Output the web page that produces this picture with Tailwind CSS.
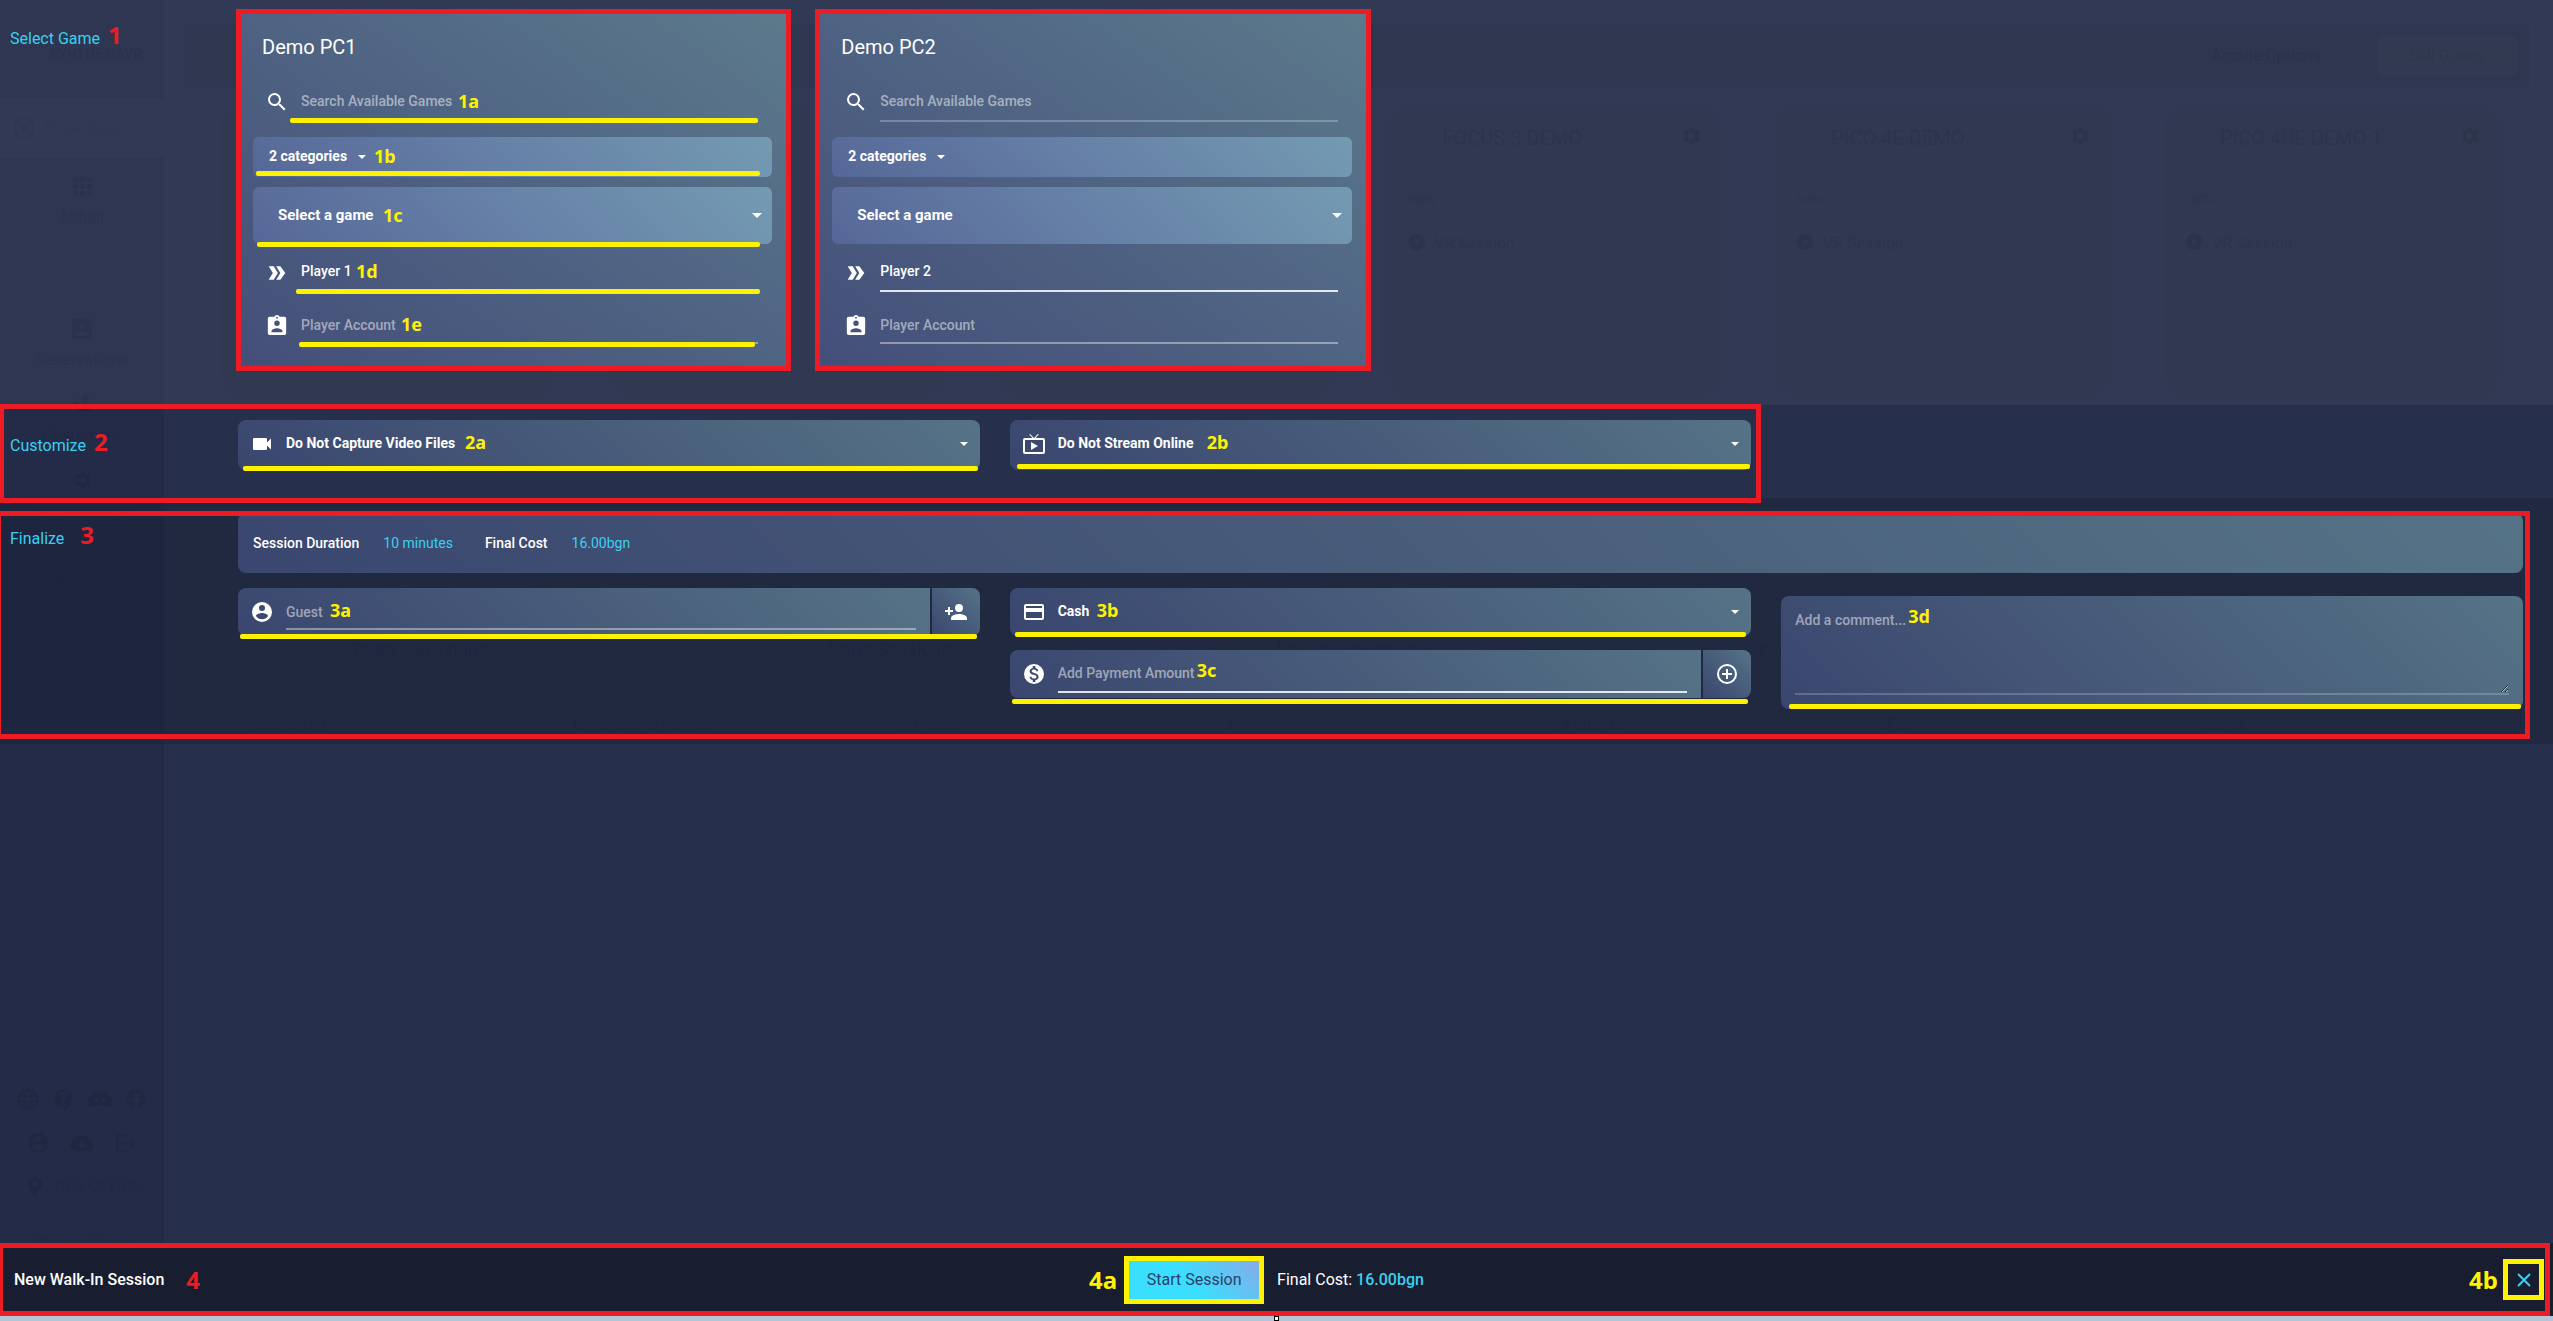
<!DOCTYPE html>
<html lang="en">
  <head>
    <meta charset="utf-8" />
    <title>New Walk-In Session</title>
    <script src="https://cdn.jsdelivr.net/npm/@tailwindcss/browser@4"></script>
  </head>
  <body
    class="relative flex min-h-screen flex-col overflow-x-hidden bg-[#262f4b] font-['Roboto',sans-serif] text-sm text-white"
  >
    <!-- icons -->
    <svg class="hidden">
      <symbol id="i-search" viewBox="0 0 24 24"><path d="M15.5 14h-.79l-.28-.27A6.47 6.47 0 0 0 16 9.5 6.5 6.5 0 1 0 9.5 16c1.61 0 3.09-.59 4.23-1.57l.27.28v.79l5 4.99L20.49 19l-4.99-5zm-6 0C7.01 14 5 11.99 5 9.5S7.01 5 9.5 5 14 7.01 14 9.5 11.99 14 9.5 14z" /></symbol>
      <symbol id="i-chevrons" viewBox="0 0 24 24"><path d="M2 4h6l5 8-5 8H2l5-8zM11 4h5l6 8-6 8h-5l5-8z" /></symbol>
      <symbol id="i-badge" viewBox="0 0 24 24"><path d="M20 3h-5.180C14.4 1.84 13.3 1 12 1s-2.4.84-2.82 2H4a2 2 0 0 0-2 2v16a2 2 0 0 0 2 2h16a2 2 0 0 0 2-2V5a2 2 0 0 0-2-2zm-8 0a1 1 0 1 1 0 2 1 1 0 0 1 0-2zm0 4a3 3 0 1 1 0 6 3 3 0 0 1 0-6zm6 13H6v-1.4c0-2 4-3.1 6-3.1s6 1.1 6 3.1V20z" /></symbol>
      <symbol id="i-video" viewBox="0 0 24 24"><path d="M17 10.5V7a1 1 0 0 0-1-1H4a1 1 0 0 0-1 1v10a1 1 0 0 0 1 1h12a1 1 0 0 0 1-1v-3.500l4 4v-11l-4 4z" /></symbol>
      <symbol id="i-live" viewBox="0 0 24 24"><path d="M21 6h-7.590l3.290-3.290L16 2l-4 4-4-4-.71.710L10.590 6H3a2 2 0 0 0-2 2v12a2 2 0 0 0 2 2h18a2 2 0 0 0 2-2V8a2 2 0 0 0-2-2zm0 14H3V8h18v12zM9 10v8l7-4z" /></symbol>
      <symbol id="i-account" viewBox="0 0 24 24"><path d="M12 2a10 10 0 1 0 0 20 10 10 0 0 0 0-20zm0 3a3 3 0 1 1 0 6 3 3 0 0 1 0-6zm0 14.200a7.200 7.200 0 0 1-6-3.220c.03-1.990 4-3.080 6-3.080s5.970 1.090 6 3.080a7.200 7.200 0 0 1-6 3.220z" /></symbol>
      <symbol id="i-adduser" viewBox="0 0 24 24"><path d="M15 12a4 4 0 1 0 0-8 4 4 0 0 0 0 8zm-9-2V7H4v3H1v2h3v3h2v-3h3v-2H6zm9 4c-2.670 0-8 1.340-8 4v2h16v-2c0-2.660-5.330-4-8-4z" /></symbol>
      <symbol id="i-card" viewBox="0 0 24 24"><path d="M20 4H4a2 2 0 0 0-2 2v12a2 2 0 0 0 2 2h16a2 2 0 0 0 2-2V6a2 2 0 0 0-2-2zm0 14H4v-6h16v6zm0-10H4V6h16v2z" /></symbol>
      <symbol id="i-dollar" viewBox="0 0 24 24"><path d="M12 2a10 10 0 1 0 0 20 10 10 0 0 0 0-20zm1.410 16.090V20h-2.670v-1.930c-1.710-.360-3.160-1.460-3.270-3.400h1.960c.1 1.050.82 1.870 2.650 1.870 1.960 0 2.400-.98 2.400-1.590 0-.830-.44-1.610-2.670-2.140-2.480-.6-4.180-1.620-4.180-3.670 0-1.720 1.390-2.840 3.110-3.210V4h2.670v1.950c1.860.450 2.790 1.860 2.850 3.390H14.300c-.05-1.110-.64-1.870-2.220-1.870-1.500 0-2.400.68-2.400 1.640 0 .840.65 1.390 2.670 1.910s4.180 1.390 4.180 3.910c-.01 1.830-1.380 2.830-3.120 3.160z" /></symbol>
      <symbol id="i-add" viewBox="0 0 24 24"><path d="M13 7h-2v4H7v2h4v4h2v-4h4v-2h-4V7zm-1-5a10 10 0 1 0 0 20 10 10 0 0 0 0-20zm0 18a8 8 0 1 1 0-16 8 8 0 0 1 0 16z" /></symbol>
      <symbol id="i-arrow" viewBox="0 0 10 5"><path d="M0 0h10L5 5z" /></symbol>
      <symbol id="i-gear" viewBox="0 0 24 24"><path fill-rule="evenodd" d="M19.140 12.940a7 7 0 0 0 0-1.880l2.030-1.580-1.920-3.320-2.390.960a7 7 0 0 0-1.620-.94L14.880 3.600h-3.840l-.36 2.580a7 7 0 0 0-1.620.94l-2.390-.96-1.920 3.320 2.030 1.580a7 7 0 0 0 0 1.880l-2.030 1.580 1.920 3.320 2.390-.96c.5.380 1.030.700 1.620.94l.36 2.580h3.840l.36-2.580c.59-.24 1.130-.560 1.620-.94l2.390.96 1.920-3.320zM12 15.600a3.600 3.600 0 1 1 0-7.200 3.600 3.600 0 0 1 0 7.200z" /></symbol>
      <symbol id="i-play" viewBox="0 0 24 24"><path fill-rule="evenodd" d="M12 2a10 10 0 1 0 0 20 10 10 0 0 0 0-20zM10 7.500v9l6-4.500z" /></symbol>
      <symbol id="i-pin" viewBox="0 0 24 24"><path fill-rule="evenodd" d="M12 2a7 7 0 0 0-7 7c0 5.250 7 13 7 13s7-7.750 7-13a7 7 0 0 0-7-7zm0 9.500a2.500 2.500 0 1 1 0-5 2.500 2.500 0 0 1 0 5z" /></symbol>
      <symbol id="i-logout" viewBox="0 0 24 24"><path d="M17 7l-1.400 1.400L18.200 11H8v2h10.200l-2.600 2.600L17 17l5-5zM4 5h8V3H4a2 2 0 0 0-2 2v14a2 2 0 0 0 2 2h8v-2H4z" /></symbol>
      <symbol id="i-cloud" viewBox="0 0 24 24"><path d="M19.350 10.040A7.490 7.490 0 0 0 5.350 8.040 6 6 0 0 0 6 20h13a5 5 0 0 0 .35-9.960zM17 13l-5 5-5-5h3V9h4v4z" /></symbol>
      <symbol id="i-globe" viewBox="0 0 24 24"><path d="M12 2.500a9.500 9.500 0 1 0 0 19 9.500 9.500 0 0 0 0-19zM3 9h18M3 15h18M12 3c-5 5-5 13 0 18M12 3c5 5 5 13 0 18" fill="none" stroke="currentColor" stroke-width="2" /></symbol>
      <symbol id="i-apps" viewBox="0 0 24 24"><path d="M3 3h5v5H3zM10 3h5v5h-5zM17 3h5v5h-5zM3 10h5v5H3zM10 10h5v5h-5zM17 10h5v5h-5zM3 17h5v5H3zM10 17h5v5h-5zM17 17h5v5h-5z" /></symbol>
      <symbol id="i-help" viewBox="0 0 24 24"><path fill-rule="evenodd" d="M11.500 2a9.500 9.500 0 0 0 0 19h.5v3c4.860-2.340 8-7 8-11.500A9.500 9.500 0 0 0 11.500 2zm1 15.500h-2v-2h2zm0-3.500h-2c0-3.250 3-3 3-5a2 2 0 0 0-4 0h-2a4 4 0 0 1 8 0c0 2.500-3 2.750-3 5z" /></symbol>
      <symbol id="i-discord" viewBox="0 0 24 24"><path fill-rule="evenodd" d="M8 4C6 4.300 4.500 5 3.500 5.500 1 9.500 0 13.500.5 18c2 1.500 4 2.300 6 2.700l1.200-2.200h8.600l1.200 2.200c2-.4 4-1.200 6-2.700.5-4.500-.5-8.500-3-12.500C19.500 5 18 4.300 16 4l-.8 1.500H8.800zM8 10a2 2 0 1 1 0 4.500A2 2 0 0 1 8 10zm8 0a2 2 0 1 1 0 4.500 2 2 0 0 1 0-4.500z" /></symbol>
      <symbol id="i-facebook" viewBox="0 0 24 24"><path d="M22 12a10 10 0 1 0-11.500 9.900v-7H8V12h2.500V9.800c0-2.500 1.500-3.900 3.800-3.900 1.100 0 2.200.2 2.200.2v2.500h-1.300c-1.200 0-1.600.8-1.600 1.500V12h2.800l-.4 2.900h-2.400v7A10 10 0 0 0 22 12z" /></symbol>
    </svg>

    <!-- dimmed dashboard behind the dialog -->
    <div class="absolute inset-0 flex overflow-hidden text-base text-black/10" aria-hidden="true">
      <div class="flex w-[164px] shrink-0 flex-col items-center bg-[#232b48] text-black/7">
        <p class="mt-[46px] pl-7 text-sm leading-4 font-bold">SYNTHESISVR</p>
        <div class="mt-9 flex h-[60px] w-full items-center gap-2 rounded-r bg-white/2 pl-3">
          <svg class="size-6 fill-current"><use href="#i-add" /></svg>Book Session
        </div>
        <svg class="mt-4 size-6 fill-current"><use href="#i-apps" /></svg>
        <p class="mt-2">Mihail</p>
        <svg class="mt-[86px] size-6 fill-current"><use href="#i-badge" /></svg>
        <p class="mt-2">Reservations</p>
        <svg class="mt-5 size-6 fill-current"><use href="#i-adduser" /></svg>
        <p class="mt-2">Customers</p>
        <svg class="mt-5 size-6 fill-current"><use href="#i-gear" /></svg>
        <p class="mt-2">Administration</p>
        <p class="mt-12">Reports</p>
        <div class="mt-auto mb-5 flex items-center gap-3">
          <svg class="size-6 fill-current"><use href="#i-globe" /></svg>
          <svg class="size-6 fill-current"><use href="#i-help" /></svg>
          <svg class="size-6 fill-current"><use href="#i-discord" /></svg>
          <svg class="size-6 fill-current"><use href="#i-facebook" /></svg>
        </div>
        <div class="mb-5 flex gap-5">
          <svg class="size-6 fill-current"><use href="#i-account" /></svg>
          <svg class="size-6 fill-current"><use href="#i-cloud" /></svg>
          <svg class="size-6 fill-current"><use href="#i-logout" /></svg>
        </div>
        <p class="mb-8 flex items-center gap-2">
          <svg class="size-6 fill-current"><use href="#i-pin" /></svg>DEV OFFICE
        </p>
        <p class="mb-[66px]">Privacy Policy</p>
      </div>
      <div class="min-w-0 flex-1 pt-6 pr-6 pl-5">
        <div class="flex h-16 items-center justify-end gap-14 rounded bg-black/6 pr-3">
          <p>Arcade Options</p>
          <p class="flex h-10 items-center rounded bg-white/2 px-8">Sell Goods</p>
        </div>
        <div class="mt-4 mr-7 ml-9 grid h-[294px] grid-cols-6 gap-[52px]">
          <div class="rounded-3xl bg-black/2"></div>
          <div class="rounded-3xl bg-black/2"></div>
          <div class="rounded-3xl bg-black/2"></div>
          <div class="rounded-3xl bg-black/2 px-5 pt-5">
            <p class="flex justify-between pl-9 text-xl">FOCUS 3 DEMO <svg class="size-6 fill-current"><use href="#i-gear" /></svg></p>
            <p class="mt-10 text-xs">100%</p>
            <p class="mt-6 flex gap-2"><svg class="size-5 fill-current"><use href="#i-play" /></svg>VR Session</p>
          </div>
          <div class="rounded-3xl bg-black/2 px-5 pt-5">
            <p class="flex justify-between pl-9 text-xl">PICO 4E DEMO <svg class="size-6 fill-current"><use href="#i-gear" /></svg></p>
            <p class="mt-10 text-xs">100%</p>
            <p class="mt-6 flex gap-2"><svg class="size-5 fill-current"><use href="#i-play" /></svg>VR Session</p>
          </div>
          <div class="rounded-3xl bg-black/2 px-5 pt-5">
            <p class="flex justify-between pl-9 text-xl">PICO 4UE DEMO 1 <svg class="size-6 fill-current"><use href="#i-gear" /></svg></p>
            <p class="mt-10 text-xs">100%</p>
            <p class="mt-6 flex gap-2"><svg class="size-5 fill-current"><use href="#i-play" /></svg>VR Session</p>
          </div>
        </div>
        <div class="mt-[238px] grid grid-cols-5 text-center text-lg text-black/7">
          <p>Today's Sessions</p>
          <p>Active Sessions</p>
          <p>Upcoming Sessions</p>
          <p>Walk-in Sessions</p>
          <p>Completed Sessions</p>
        </div>
        <div class="mt-[50px] grid grid-cols-7 pl-16 text-black/7">
          <p>Completed</p>
          <p>02:32pm - 02:32pm</p>
          <p>20 mins</p>
          <p>1</p>
          <p>24.00bgn</p>
          <p>TEST</p>
          <p>Guest</p>
        </div>
      </div>
    </div>

    <!-- 1: select game -->
    <section class="relative flex min-h-[405px] bg-white/5 pt-[9px]">
      <h2 class="w-[236px] shrink-0 pt-3 pl-[10px] text-base leading-7 text-[#3bd0ef]">
        Select Game
        <b class="ml-1 font-['Noto_Sans',sans-serif] text-2xl leading-7 text-[#ed1c24]">1</b>
      </h2>
      <div class="grid flex-1 grid-cols-4 items-start gap-6 pr-6">
        <div class="border-5 border-[#ed1c24] bg-[linear-gradient(35deg,#444f79,#4f6383_50%,#5c7a8c)] pt-[19px] pb-[22px]">
          <h3 class="pl-[21px] text-xl leading-7">Demo PC1</h3>
          <div class="relative mt-[21px] flex h-10 pr-7 pl-[60px]">
            <svg class="absolute top-2 left-6 size-6 fill-white"><use href="#i-search" /></svg>
            <input type="text" aria-label="Search available games" placeholder="Search Available Games" class="w-full border-b-2 border-white/25 text-sm font-medium outline-none placeholder:text-white/50" />
            <b class="absolute top-[7px] left-[217px] font-['Noto_Sans',sans-serif] text-lg leading-6 text-[#fff200]">1a</b>
            <span class="absolute right-7 -bottom-px left-[49px] h-[5px] rounded-xs bg-[#fff200]"></span>
          </div>
          <div class="relative mt-[15px] mr-[14px] ml-3 h-10 rounded-md bg-[linear-gradient(45deg,#566797,#657fa6_45%,#749bb2)]">
            <select aria-label="Categories" class="h-[38px] w-full appearance-none px-4 font-bold outline-none"><option>2 categories</option></select>
            <svg class="absolute top-[18px] left-[105px] h-1 w-2 fill-white"><use href="#i-arrow" /></svg>
            <b class="absolute top-[7px] left-[121px] font-['Noto_Sans',sans-serif] text-lg leading-6 text-[#fff200]">1b</b>
            <span class="absolute right-3 bottom-px left-[3px] h-[5px] rounded-xs bg-[#fff200]"></span>
          </div>
          <div class="relative mt-[10px] mr-[14px] ml-3 h-[57px] rounded-md bg-[linear-gradient(45deg,#566797,#657fa6_45%,#749bb2)]">
            <select aria-label="Game" class="h-full w-full appearance-none px-[25px] text-[15px] font-bold outline-none"><option>Select a game</option></select>
            <svg class="absolute top-[26px] right-[10px] h-[5px] w-[10px] fill-white"><use href="#i-arrow" /></svg>
            <b class="absolute top-4 left-[130px] font-['Noto_Sans',sans-serif] text-lg leading-6 text-[#fff200]">1c</b>
            <span class="absolute right-3 -bottom-[3px] left-1 h-[5px] rounded-xs bg-[#fff200]"></span>
          </div>
          <div class="relative mt-2 flex h-10 pr-7 pl-[60px]">
            <svg class="absolute top-[11px] left-[26px] size-5 fill-white"><use href="#i-chevrons" /></svg>
            <input type="text" aria-label="Player name" value="Player 1" class="w-full border-b-2 border-white/85 text-sm font-medium outline-none" />
            <b class="absolute top-[7px] left-[115px] font-['Noto_Sans',sans-serif] text-lg leading-6 text-[#fff200]">1d</b>
            <span class="absolute right-[26px] -bottom-[2px] left-[55px] h-[5px] rounded-xs bg-[#fff200]"></span>
          </div>
          <div class="relative mt-4 flex h-9 pr-7 pl-[60px]">
            <svg class="absolute top-[6px] left-[25px] size-[22px] fill-white"><use href="#i-badge" /></svg>
            <input type="text" aria-label="Player account" placeholder="Player Account" class="w-full border-b-2 border-white/40 text-sm font-medium outline-none placeholder:text-white/50" />
            <b class="absolute top-1 left-[160px] font-['Noto_Sans',sans-serif] text-lg leading-6 text-[#fff200]">1e</b>
            <span class="absolute right-[31px] -bottom-[3px] left-[58px] h-[5px] rounded-xs bg-[#fff200]"></span>
          </div>
        </div>

        <div class="border-5 border-[#ed1c24] bg-[linear-gradient(35deg,#444f79,#4f6383_50%,#5c7a8c)] pt-[19px] pb-[22px]">
          <h3 class="pl-[21px] text-xl leading-7">Demo PC2</h3>
          <div class="relative mt-[21px] flex h-10 pr-7 pl-[60px]">
            <svg class="absolute top-2 left-6 size-6 fill-white"><use href="#i-search" /></svg>
            <input type="text" aria-label="Search available games" placeholder="Search Available Games" class="w-full border-b-2 border-white/25 text-sm font-medium outline-none placeholder:text-white/50" />
          </div>
          <div class="relative mt-[15px] mr-[14px] ml-3 h-10 rounded-md bg-[linear-gradient(45deg,#566797,#657fa6_45%,#749bb2)]">
            <select aria-label="Categories" class="h-[38px] w-full appearance-none px-4 font-bold outline-none"><option>2 categories</option></select>
            <svg class="absolute top-[18px] left-[105px] h-1 w-2 fill-white"><use href="#i-arrow" /></svg>
          </div>
          <div class="relative mt-[10px] mr-[14px] ml-3 h-[57px] rounded-md bg-[linear-gradient(45deg,#566797,#657fa6_45%,#749bb2)]">
            <select aria-label="Game" class="h-full w-full appearance-none px-[25px] text-[15px] font-bold outline-none"><option>Select a game</option></select>
            <svg class="absolute top-[26px] right-[10px] h-[5px] w-[10px] fill-white"><use href="#i-arrow" /></svg>
          </div>
          <div class="relative mt-2 flex h-10 pr-7 pl-[60px]">
            <svg class="absolute top-[11px] left-[26px] size-5 fill-white"><use href="#i-chevrons" /></svg>
            <input type="text" aria-label="Player name" value="Player 2" class="w-full border-b-2 border-white/85 text-sm font-medium outline-none" />
          </div>
          <div class="relative mt-4 flex h-9 pr-7 pl-[60px]">
            <svg class="absolute top-[6px] left-[25px] size-[22px] fill-white"><use href="#i-badge" /></svg>
            <input type="text" aria-label="Player account" placeholder="Player Account" class="w-full border-b-2 border-white/40 text-sm font-medium outline-none placeholder:text-white/50" />
          </div>
        </div>
      </div>
    </section>

    <!-- 2: customize -->
    <section class="relative flex pt-[15px] pb-7">
      <h2 class="w-[238px] shrink-0 pt-2 pl-[10px] text-base leading-7 text-[#3bd0ef]">
        Customize
        <b class="ml-1 font-['Noto_Sans',sans-serif] text-2xl leading-7 text-[#ed1c24]">2</b>
      </h2>
      <div class="grid flex-1 grid-cols-3 gap-[30px] pr-[30px]">
        <div class="relative h-[50px] rounded-lg bg-[linear-gradient(45deg,#3a466f,#475a79_45%,#557387)]">
          <svg class="absolute top-3 left-3 size-6 fill-white"><use href="#i-video" /></svg>
          <select aria-label="Video capture" class="h-[46px] w-full appearance-none px-12 font-bold outline-none"><option>Do Not Capture Video Files</option></select>
          <svg class="absolute top-[22px] right-3 h-1 w-2 fill-white"><use href="#i-arrow" /></svg>
          <b class="absolute top-[10px] left-[227px] font-['Noto_Sans',sans-serif] text-lg leading-6 text-[#fff200]">2a</b>
          <span class="absolute right-[2px] -bottom-px left-[5px] h-[5px] rounded-xs bg-[#fff200]"></span>
        </div>
        <div class="relative h-[50px] rounded-lg bg-[linear-gradient(45deg,#3a466f,#475a79_45%,#557387)]">
          <svg class="absolute top-3 left-3 size-6 fill-white"><use href="#i-live" /></svg>
          <select aria-label="Streaming" class="h-[46px] w-full appearance-none px-12 font-bold outline-none"><option>Do Not Stream Online</option></select>
          <svg class="absolute top-[22px] right-3 h-1 w-2 fill-white"><use href="#i-arrow" /></svg>
          <b class="absolute top-[10px] left-[197px] font-['Noto_Sans',sans-serif] text-lg leading-6 text-[#fff200]">2b</b>
          <span class="absolute right-px bottom-px left-[7px] h-[5px] rounded-xs bg-[#fff200]"></span>
        </div>
      </div>
      <div class="pointer-events-none absolute -top-px right-[calc(33.333%-59px)] -bottom-[5px] -left-px z-10 border-5 border-[#ed1c24]"></div>
    </section>

    <!-- 3: finalize -->
    <section class="relative flex bg-black/12 pt-[15px] pb-[35px]">
      <h2 class="w-[238px] shrink-0 pt-2 pl-[10px] text-base leading-7 text-[#3bd0ef]">
        Finalize
        <b class="ml-3 font-['Noto_Sans',sans-serif] text-2xl leading-7 text-[#ed1c24]">3</b>
      </h2>
      <div class="flex-1 pr-[30px]">
        <div class="flex h-[60px] items-center rounded-lg bg-[linear-gradient(45deg,#3a466f,#475a79_45%,#557387)] px-[15px] text-sm">
          <span class="font-medium">Session Duration</span>
          <span class="ml-6 text-[#3bd0ef]">10 minutes</span>
          <span class="ml-8 font-medium">Final Cost</span>
          <span class="ml-6 text-[#3bd0ef]">16.00bgn</span>
        </div>
        <div class="mt-[15px] grid grid-cols-3 items-start gap-[30px]">
          <div class="relative flex h-12 gap-[2px]">
            <div class="relative flex-1 rounded-l-lg bg-[linear-gradient(45deg,#3a466f,#475a79_45%,#557387)] pr-[14px] pl-12">
              <svg class="absolute top-3 left-3 size-6 fill-white"><use href="#i-account" /></svg>
              <input type="text" aria-label="Guest" placeholder="Guest" class="h-[42px] w-full border-b-2 border-white/40 pt-2 text-sm font-medium outline-none placeholder:text-white/50" />
            </div>
            <button aria-label="Add customer" class="flex w-12 items-center justify-center rounded-r-lg bg-[linear-gradient(45deg,#3a466f,#557387)]">
              <svg class="size-6 fill-white"><use href="#i-adduser" /></svg>
            </button>
            <b class="absolute top-[10px] left-[92px] font-['Noto_Sans',sans-serif] text-lg leading-6 text-[#fff200]">3a</b>
            <span class="absolute right-[3px] -bottom-[3px] left-[2px] h-[5px] rounded-xs bg-[#fff200]"></span>
          </div>
          <div>
            <div class="relative h-12 rounded-lg bg-[linear-gradient(45deg,#3a466f,#475a79_45%,#557387)]">
              <svg class="absolute top-3 left-3 size-6 fill-white"><use href="#i-card" /></svg>
              <select aria-label="Payment method" class="h-[46px] w-full appearance-none px-12 font-bold outline-none"><option>Cash</option></select>
              <svg class="absolute top-[22px] right-3 h-1 w-2 fill-white"><use href="#i-arrow" /></svg>
              <b class="absolute top-[10px] left-[87px] font-['Noto_Sans',sans-serif] text-lg leading-6 text-[#fff200]">3b</b>
              <span class="absolute right-[5px] -bottom-px left-[5px] h-[5px] rounded-xs bg-[#fff200]"></span>
            </div>
            <div class="relative mt-[14px] flex h-12 gap-[2px]">
              <div class="relative flex-1 rounded-l-lg bg-[linear-gradient(45deg,#3a466f,#475a79_45%,#557387)] pr-[14px] pl-12">
                <svg class="absolute top-3 left-3 size-6 fill-white"><use href="#i-dollar" /></svg>
                <input type="text" aria-label="Payment amount" placeholder="Add Payment Amount" class="h-[43px] w-full border-b-2 border-white/85 pt-1 text-sm font-medium outline-none placeholder:text-white/50" />
              </div>
              <button aria-label="Add payment" class="flex w-12 items-center justify-center rounded-r-lg bg-[linear-gradient(45deg,#3a466f,#557387)]">
                <svg class="size-6 fill-white"><use href="#i-add" /></svg>
              </button>
              <b class="absolute top-2 left-[187px] font-['Noto_Sans',sans-serif] text-lg leading-6 text-[#fff200]">3c</b>
              <span class="absolute right-[3px] -bottom-[6px] left-[2px] h-[5px] rounded-xs bg-[#fff200]"></span>
            </div>
          </div>
          <div class="relative mt-2 flex h-[113px] rounded-lg bg-[linear-gradient(45deg,#3a466f,#475a79_45%,#557387)] px-[14px] pt-[14px]">
            <textarea aria-label="Comment" placeholder="Add a comment..." class="h-[85px] w-full border-b-2 border-white/20 text-sm font-medium outline-none placeholder:text-white/50"></textarea>
            <b class="absolute top-2 left-[127px] font-['Noto_Sans',sans-serif] text-lg leading-6 text-[#fff200]">3d</b>
            <span class="absolute right-[2px] bottom-0 left-2 h-[5px] rounded-xs bg-[#fff200]"></span>
          </div>
        </div>
      </div>
      <div class="pointer-events-none absolute top-[13px] right-[23px] bottom-[5px] -left-1 z-10 border-5 border-[#ed1c24]"></div>
    </section>

    <!-- 4: footer -->
    <footer class="relative mt-auto bg-[#181d30]">
      <div class="mr-[3px] flex h-[73px] items-center border-5 border-l-3 border-[#ed1c24]">
        <div class="flex flex-1 items-center gap-[22px] pl-[11px] text-base font-medium">
          New Walk-In Session
          <b class="font-['Noto_Sans',sans-serif] text-2xl leading-7 text-[#ed1c24]">4</b>
        </div>
        <div class="relative flex items-center gap-[13px] pr-[10px] text-base">
          <b class="absolute -left-[35px] font-['Noto_Sans',sans-serif] text-2xl leading-7 text-[#fff200]">4a</b>
          <button class="h-12 w-[140px] border-5 border-[#fff200] bg-[linear-gradient(45deg,#3adffe_45%,#8ea5e6)] bg-origin-border text-[#2b3f6b]">Start Session</button>
          <p>Final Cost: <span class="font-medium text-[#3bd0ef]">16.00bgn</span></p>
        </div>
        <div class="flex flex-1 items-center justify-end gap-[5px] pr-px">
          <b class="font-['Noto_Sans',sans-serif] text-2xl leading-7 text-[#fff200]">4b</b>
          <button aria-label="Close" class="flex size-[41px] items-center justify-center border-5 border-[#fff200]">
            <svg viewBox="0 0 14 14" class="size-[14px] stroke-[#3bd0ef] stroke-2"><path d="M1 1l12 12M13 1L1 13" /></svg>
          </button>
        </div>
      </div>
      <div class="flex h-[5px] justify-center bg-[#b5c4d6]">
        <span class="size-[5px] border border-black bg-white"></span>
      </div>
    </footer>
  </body>
</html>
